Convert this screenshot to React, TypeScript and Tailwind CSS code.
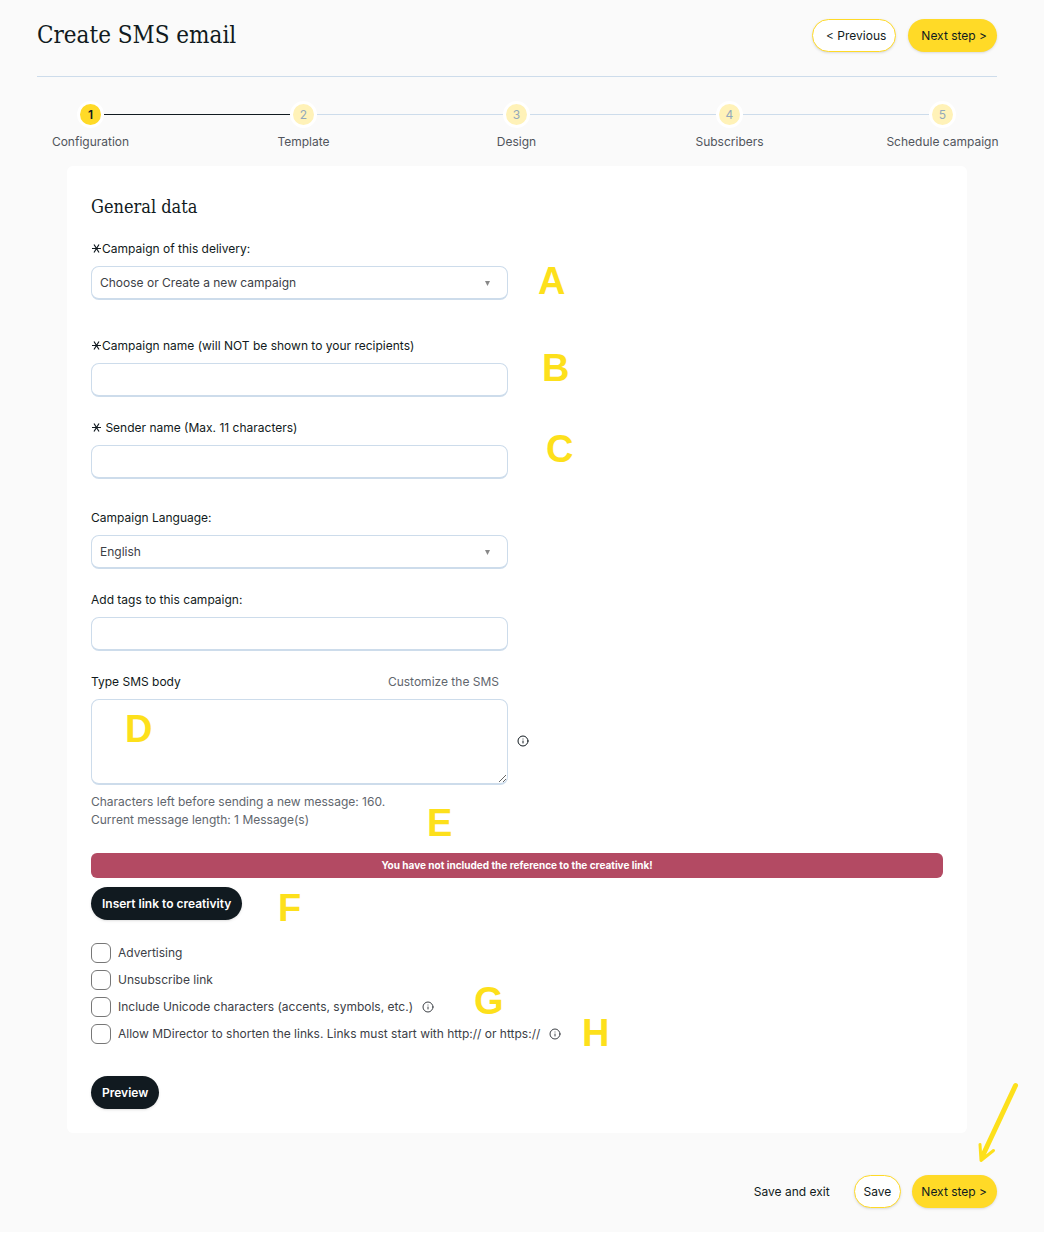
import { Info } from "lucide-react";

const steps = ["Configuration", "Template", "Design", "Subscribers", "Schedule campaign"];

const markers = [
  { letter: "A", place: "left-[471px] top-[96px]" },
  { letter: "B", place: "left-[475px] top-[183px]" },
  { letter: "C", place: "left-[479px] top-[264px]" },
  { letter: "D", place: "left-[58px] top-[544px]" },
  { letter: "E", place: "left-[360px] top-[638px]" },
  { letter: "F", place: "left-[211px] top-[723px]" },
  { letter: "G", place: "left-[407px] top-[816px]" },
  { letter: "H", place: "left-[515px] top-[848px]" },
];

const options = [
  { id: "advertising", label: "Advertising", info: false },
  { id: "unsubscribe", label: "Unsubscribe link", info: false },
  { id: "unicode", label: "Include Unicode characters (accents, symbols, etc.)", info: true },
  {
    id: "shorten",
    label: "Allow MDirector to shorten the links. Links must start with http:// or https://",
    info: true,
  },
];

const control =
  "block w-full h-[34px] rounded-lg border border-b-2 border-[#cddceb] bg-white pl-2 pr-6 text-[#3c4046] outline-none";
const pill = "h-[33px] rounded-full shadow-sm cursor-pointer whitespace-nowrap";

function Required() {
  return (
    <svg
      className="inline-block w-[11px] h-[11px] align-[-1px]"
      viewBox="0 0 11 11"
      stroke="#111a20"
      strokeWidth="1.2"
      aria-hidden="true"
    >
      <path d="M1 5.5h9M3 1.5l5 8M8 1.5l-5 8" />
    </svg>
  );
}

function SelectField({ id, label, value, required }: { id: string; label: string; value: string; required?: boolean }) {
  return (
    <div>
      <label htmlFor={id} className="block mb-2">
        {required && <Required />}
        {label}
      </label>
      <div className="relative">
        <select id={id} className={`${control} appearance-none`}>
          <option>{value}</option>
        </select>
        <svg className="absolute right-[18px] top-[15px] w-[5px] h-[5px] pointer-events-none" viewBox="0 0 5 5" fill="#888">
          <path d="M0 0h5L2.5 5z" />
        </svg>
      </div>
    </div>
  );
}

export default function App() {
  return (
    <main className="relative bg-[#fafafa] pl-[37px] pr-[47px] pb-6 font-['Inter',sans-serif] text-[12px] leading-[18px] text-[#111a20]">

      {/* Header */}
      <header className="flex items-center justify-between border-b border-[#cddceb] pt-[19px] pb-6">
        <h1 className="font-['DejaVu_Serif_Condensed','DejaVu_Serif',serif] text-[24px] leading-[33px]">
          Create SMS email
        </h1>
        <div className="flex gap-3">
          <button className={`${pill} border border-[#ffda27] bg-white pl-[13px] pr-[9px]`}>&lt; Previous</button>
          <button className={`${pill} bg-[#ffda27] pl-[13px] pr-[10px]`}>Next step &gt;</button>
        </div>
      </header>

      {/* Steps */}
      <ol className="flex mt-6 pl-10 pr-[41px]">
        {steps.map((step, index) => (
          <li key={step} className={index === 0 ? "flex w-[27px]" : "flex flex-1"}>
            {index > 0 && (
              <span className={`flex-1 h-px mt-[13px] ${index === 1 ? "bg-[#111a20]" : "bg-[#cddceb]"}`} />
            )}
            <div className="flex flex-col items-center w-[27px] whitespace-nowrap">
              <span
                className={`flex items-center justify-center w-[27px] h-[27px] shrink-0 rounded-full border-3 border-white ${
                  index === 0 ? "bg-[#ffda27] font-semibold" : "bg-[#fff2b8] text-[#93a8bb]"
                }`}
              >
                {index + 1}
              </span>
              <span className="mt-[5px] text-[#51555c]">{step}</span>
            </div>
          </li>
        ))}
      </ol>

      {/* General data */}
      <section className="relative mx-[30px] mt-[15px] rounded-md bg-white p-6">
        <h2 className="font-['DejaVu_Serif_Condensed','DejaVu_Serif',serif] text-[18px] leading-[33px]">General data</h2>

        <form className="mt-[17px]" onSubmit={(e) => e.preventDefault()}>
          <div className="max-w-[417px]">
            <SelectField id="campaign" label="Campaign of this delivery:" value="Choose or Create a new campaign" required />

            <div className="mt-[37px]">
              <label htmlFor="name" className="block mb-2">
                <Required />
                Campaign name (will NOT be shown to your recipients)
              </label>
              <input id="name" type="text" className={control} />
            </div>

            <div className="mt-[22px] mb-[30px]">
              <label htmlFor="sender" className="block mb-2">
                <Required /> Sender name (Max. 11 characters)
              </label>
              <input id="sender" type="text" className={control} />
            </div>

            <SelectField id="language" label="Campaign Language:" value="English" />

            <div className="mt-[22px]">
              <label htmlFor="tags" className="block mb-2">
                Add tags to this campaign:
              </label>
              <input id="tags" type="text" className={control} />
            </div>

            <div className="mt-[22px]">
              <div className="flex justify-between mb-2 pr-[9px]">
                <label htmlFor="body">Type SMS body</label>
                <a href="#customize" className="text-[#61666d]">
                  Customize the SMS
                </a>
              </div>
              <div className="relative">
                <textarea
                  id="body"
                  className="block w-full h-[86px] resize rounded-lg border border-b-2 border-[#cddceb] bg-white p-2 outline-none"
                />
                <Info className="absolute left-full top-9 ml-[9px]" size={12} aria-label="SMS body help" />
              </div>
            </div>
          </div>

          <p className="mt-2 text-[#61666d]">
            Characters left before sending a new message: 160.
            <br />
            Current message length: 1 Message(s)
          </p>

          <p className="mt-6 h-[25px] rounded-md bg-[#b34a63] text-center text-[10px] leading-[24px] font-bold text-white">
            You have not included the reference to the creative link!
          </p>

          <button className={`${pill} mt-[9px] bg-[#111a20] px-[11px] font-semibold text-white`}>
            Insert link to creativity
          </button>

          <div className="mt-[23px] flex flex-col gap-[7px]">
            {options.map((option) => (
              <div key={option.id} className="flex items-center h-5 text-[#3c4046]">
                <input
                  id={option.id}
                  type="checkbox"
                  className="w-5 h-5 appearance-none rounded-md border border-[#777] bg-white checked:bg-[#ffda27]"
                />
                <label htmlFor={option.id} className="ml-[7px]">
                  {option.label}
                </label>
                {option.info && <Info className="ml-[9px]" size={12} />}
              </div>
            ))}
          </div>

          <button className={`${pill} mt-8 bg-[#111a20] px-[11px] font-semibold text-white`}>Preview</button>
        </form>

        {markers.map((marker) => (
          <span
            key={marker.letter}
            className={`absolute pointer-events-none font-['Liberation_Sans',sans-serif] text-[38px] leading-[38px] font-bold text-[#fde01b] ${marker.place}`}
          >
            {marker.letter}
          </span>
        ))}
      </section>

      {/* Footer */}
      <footer className="relative flex items-center justify-end mt-[42px]">
        <a href="#exit" className="mr-6">
          Save and exit
        </a>
        <button className={`${pill} border border-[#ffda27] bg-white px-[9px] mr-[11px]`}>Save</button>
        <button className={`${pill} bg-[#ffda27] pl-[9px] pr-[10px]`}>Next step &gt;</button>
        <svg
          className="absolute right-[-22px] bottom-[43px] w-11 h-[84px] pointer-events-none"
          viewBox="0 0 44 84"
          fill="none"
          stroke="#fde01b"
          strokeLinecap="round"
          strokeLinejoin="round"
        >
          <path d="M40.5 4.5L8 74" strokeWidth="5" />
          <path d="M5 63.500L6 79.500 18.500 69.500" strokeWidth="3" />
          <path d="M6 72l0 7.500 7-5.500z" fill="#fde01b" stroke="none" />
        </svg>
      </footer>

    </main>
  );
}
